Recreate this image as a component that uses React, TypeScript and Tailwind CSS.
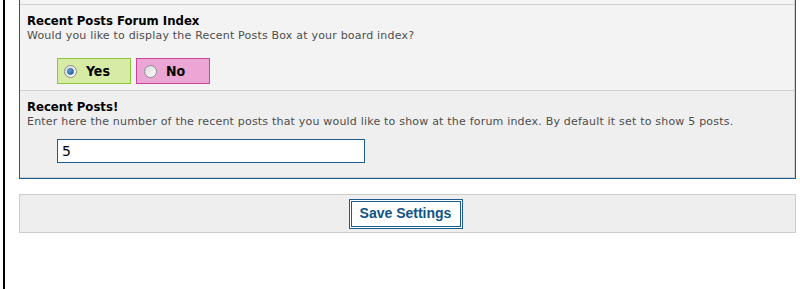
import React from 'react'

const blue = 'border-[#1d5c8c]'

function Radio({ checked }: { checked?: boolean }) {
  return (
    <span className="flex h-[13px] w-[13px] items-center justify-center rounded-full border border-[#8a8f96] bg-gradient-to-br from-[#d8d8d8] to-white">
      {checked && <span className="h-[7px] w-[7px] rounded-full bg-gradient-to-br from-[#6fb2e6] to-[#1d5c9c] border border-[#2a5f8f]" />}
    </span>
  )
}

export default function App() {
  return (
    <div className="h-[289px] w-[800px] overflow-hidden bg-white pl-[3px] font-['DejaVu_Sans',sans-serif]">
      <div className="flex h-full border-l-2 border-black pl-[14px] pr-[4px]">
        <div className="flex-1">
          <div className={`border-x border-b ${blue}`}>
            <div className="border-r border-b border-[#cfcfcf]">
              <div className="h-[4px] bg-[#f3f3f3]" />

              <div className="h-[86px] border-t border-[#cfcfcf] bg-[#f3f3f3] px-[7px] pt-[8px]">
                <h3 className="text-[13px] font-bold leading-[16px] text-black font-['DejaVu_Sans_Condensed','DejaVu_Sans',sans-serif]">
                  Recent Posts Forum Index
                </h3>
                <p className="text-[11px] leading-[14px] tracking-[0.2px] text-[#4d4d4d]">
                  Would you like to display the Recent Posts Box at your board index?
                </p>
                <div className="mt-[15px] ml-[30px] flex gap-[5px]">
                  <label className="flex h-[26px] w-[74px] items-center gap-[9px] border border-[#8cc63f] bg-[#d6eba4] pl-[6px]">
                    <Radio checked />
                    <span className="text-[14px] font-bold text-black font-['DejaVu_Sans_Condensed','DejaVu_Sans',sans-serif]">Yes</span>
                  </label>
                  <label className="flex h-[26px] w-[74px] items-center gap-[9px] border border-[#cc4499] bg-[#eba6d6] pl-[7px]">
                    <Radio />
                    <span className="text-[14px] font-bold text-black font-['DejaVu_Sans_Condensed','DejaVu_Sans',sans-serif]">No</span>
                  </label>
                </div>
              </div>

              <div className="h-[87px] border-t border-[#cfcfcf] bg-[#efefef] px-[7px] pt-[8px]">
                <h3 className="text-[13px] font-bold leading-[16px] text-black font-['DejaVu_Sans_Condensed','DejaVu_Sans',sans-serif]">
                  Recent Posts!
                </h3>
                <p className="text-[11px] leading-[14px] tracking-[0.2px] text-[#4d4d4d]">
                  Enter here the number of the recent posts that you would like to show at the forum index. By default it set to show 5 posts.
                </p>
                <input
                  readOnly
                  value="5"
                  className={`mt-[10px] ml-[30px] block h-[24px] w-[308px] border ${blue} bg-white px-[4px] text-[14px] text-black outline-none font-['DejaVu_Sans',sans-serif]`}
                />
              </div>
            </div>
          </div>

          <div className="mt-[15px] flex h-[39px] items-center justify-center border border-[#cccccc] bg-[#eeeeee] pr-[4px]">
            <button className="h-[30px] w-[114px] border-[3px] border-double border-[#1d5c8c] bg-white font-['Liberation_Sans',Arial,sans-serif] text-[14px] font-bold text-[#105289]">
              Save Settings
            </button>
          </div>
        </div>
      </div>
    </div>
  )
}
